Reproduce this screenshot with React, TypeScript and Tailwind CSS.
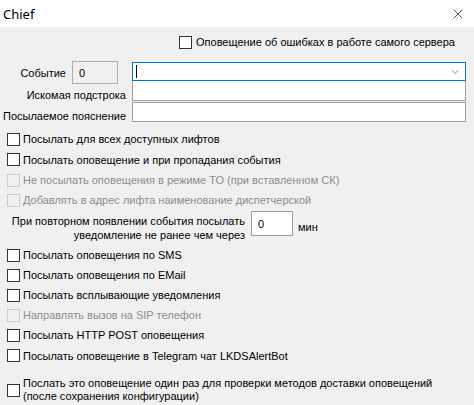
import { ChevronDown, X } from 'lucide-react';

type CheckRowProps = {
  label: string;
  disabled?: boolean;
  className?: string;
};

const CheckBox = ({ disabled }: { disabled?: boolean }) => (
  <span
    className={
      disabled
        ? 'block h-[13px] w-[13px] shrink-0 border border-[#cccccc] bg-[#f0f0f0]'
        : 'block h-[13px] w-[13px] shrink-0 border border-[#333333] bg-white'
    }
  />
);

const CheckRow = ({ label, disabled, className = 'h-[20px]' }: CheckRowProps) => (
  <div className={`flex items-center gap-[3px] pl-[7px] ${className}`}>
    <CheckBox disabled={disabled} />
    <span className={disabled ? 'text-[#8d8d8d]' : 'text-black'}>{label}</span>
  </div>
);

const App = () => {
  return (
    <div
      className="h-[405px] w-[474px] overflow-hidden whitespace-nowrap bg-[#f0f0f0] text-[11px] leading-[14px] text-black"
      style={{ fontFamily: '"Liberation Sans", Arial, sans-serif' }}
    >
      <div className="flex h-[27px] items-center justify-between bg-white pl-[3px] pr-[8px]">
        <span className="text-[13px]" style={{ fontFamily: '"Noto Sans", sans-serif' }}>
          Chief
        </span>
        <X className="h-[16px] w-[16px] text-[#222]" strokeWidth={1.2} />
      </div>

      <div className="flex h-[31px] items-start pl-[179px] pt-[8px]">
        <div className="flex items-center gap-[4px]">
          <CheckBox />
          <span>Оповещение об ошибках в работе самого сервера</span>
        </div>
      </div>

      <div className="flex">
        <div className="flex w-[126px] flex-col">
          <div className="flex pt-[3px]">
            <span className="w-[66px] pt-[5px] text-right">Событие</span>
            <div className="ml-[6px] flex h-[23px] w-[46px] items-center border border-[#adadad] bg-[#f0f0f0] pl-[6px]">
              0
            </div>
          </div>
          <div className="flex h-[22px] items-center justify-end">Искомая подстрока</div>
          <div className="flex h-[20px] items-center justify-end">Посылаемое пояснение</div>
        </div>
        <div className="ml-[6px] flex w-[334px] flex-col pt-[4px]">
          <div className="flex h-[19px] items-center justify-between border border-[#0078d7] bg-white pl-[3px] pr-[4px]">
            <span className="h-[13px] w-[1px] bg-black" />
            <ChevronDown className="h-[12px] w-[12px] text-[#606060]" strokeWidth={1.5} />
          </div>
          <div className="h-[20px] border border-t-0 border-[#a0a0a0] bg-white" />
          <div className="mt-[1px] h-[20px] border border-[#a0a0a0] bg-white" />
        </div>
      </div>

      <div className="mt-[3px] flex flex-col">
        <CheckRow label="Посылать для всех доступных лифтов" />
        <CheckRow label="Посылать оповещение и при пропадания события" className="h-[21px]" />
        <CheckRow label="Не посылать оповещения в режиме ТО (при вставленном СК)" disabled />
        <CheckRow label="Добавлять в адрес лифта наименование диспетчерской" disabled />

        <div className="flex h-[35px] items-start pt-[1px]">
          <div className="w-[245px] pt-[3px] text-right leading-[14px]">
            При повторном появлении события посылать
            <br />
            уведомление не ранее чем через
          </div>
          <div className="ml-[6px] flex h-[25px] w-[42px] items-center border border-[#a0a0a0] bg-white pl-[6px]">
            0
          </div>
          <span className="ml-[5px] pt-[9px]">мин</span>
        </div>

        <CheckRow label="Посылать оповещения по SMS" />
        <CheckRow label="Посылать оповещения по EMail" />
        <CheckRow label="Посылать всплывающие уведомления" />
        <CheckRow label="Направлять вызов на SIP телефон" disabled />
        <CheckRow label="Посылать HTTP POST оповещения" />
        <CheckRow label="Посылать оповещение в Telegram чат LKDSAlertBot" className="h-[21px]" />

        <div className="mt-[11px] flex items-center gap-[3px] pl-[7px]">
          <CheckBox />
          <span className="leading-[13px]">
            Послать это оповещение один раз для проверки методов доставки оповещений
            <br />
            (после сохранения конфигурации)
          </span>
        </div>
      </div>
    </div>
  );
};

export default App;
